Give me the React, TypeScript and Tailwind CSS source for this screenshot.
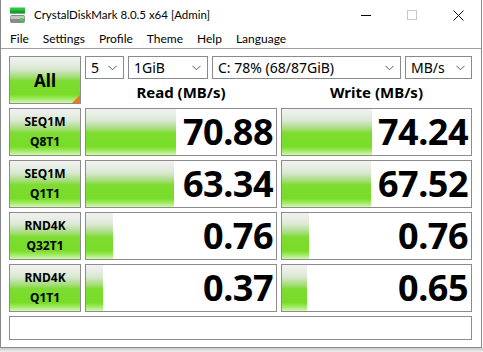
import React from 'react';

const barBg =
  'bg-[linear-gradient(180deg,#f2f2f2_0%,#dbe8d4_25%,#a9dd80_42%,#7edc30_52%,#78dc28_82%,#a6ec6a_92%,#d4f8b4_100%)]';

interface Result {
  top: string;
  bottom: string;
  read: string;
  write: string;
  readBar: number;
  writeBar: number;
}

const results: Result[] = [
  { top: 'SEQ1M', bottom: 'Q8T1', read: '70.88', write: '74.24', readBar: 90, writeBar: 90 },
  { top: 'SEQ1M', bottom: 'Q1T1', read: '63.34', write: '67.52', readBar: 88, writeBar: 89 },
  { top: 'RND4K', bottom: 'Q32T1', read: '0.76', write: '0.76', readBar: 27, writeBar: 27 },
  { top: 'RND4K', bottom: 'Q1T1', read: '0.37', write: '0.65', readBar: 17, writeBar: 25 },
];

const Chevron = () => (
  <svg width="9" height="6" viewBox="0 0 9 6" className="shrink-0">
    <path d="M0.5 0.8 L4.5 4.8 L8.5 0.8" fill="none" stroke="#5a5a5a" strokeWidth="1" />
  </svg>
);

const Select: React.FC<{ label: string; width: string }> = ({ label, width }) => (
  <div className={`${width} h-[23px] border border-[#8a8a8a] bg-white flex items-center justify-between pl-[5px] pr-[6px] text-[14px] text-black`}>
    <span className="leading-none">{label}</span>
    <Chevron />
  </div>
);

const ScoreBox: React.FC<{ value: string; bar: number }> = ({ value, bar }) => (
  <div className="relative h-[48px] border border-[#8c8c8c] bg-white overflow-hidden">
    <div className={`absolute left-0 top-0 bottom-0 ${barBg}`} style={{ width: `${bar}px` }} />
    <div className="relative h-full flex items-center justify-end pr-[3px] text-[36px] font-bold text-black leading-none tracking-[-0.5px]">
      {value}
    </div>
  </div>
);

export default function App() {
  return (
    <div className="w-[483px] h-[352px] bg-white overflow-hidden font-['Noto_Sans','Open_Sans',sans-serif]">
      <div className="w-[482px] h-[348px] border-l border-r border-b border-[#8a8a8a] bg-white flex flex-col">
        {/* title bar */}
        <div className="h-[30px] flex items-center shrink-0">
          <svg width="17" height="17" viewBox="0 0 17 17" className="ml-[8px]">
            <rect x="1" y="0.5" width="15" height="6" fill="#2ec44a" />
            <rect x="1" y="3.5" width="15" height="3" fill="#1e9a32" />
            <rect x="1" y="8" width="15" height="8" rx="2" fill="#8a8a8a" />
            <rect x="1.5" y="9" width="14" height="3" rx="1" fill="#c4c4c4" />
            <rect x="11" y="11" width="3" height="3" fill="#3cd84a" />
          </svg>
          <span className="ml-[8px] text-[11.5px] text-black font-['Lato',sans-serif]">CrystalDiskMark 8.0.5 x64 [Admin]</span>
          <div className="ml-auto flex items-center h-full">
            <div className="w-[46px] h-full flex items-center justify-center">
              <div className="w-[10px] h-px bg-black" />
            </div>
            <div className="w-[46px] h-full flex items-center justify-center">
              <div className="w-[10px] h-[10px] border border-[#c8c8c8]" />
            </div>
            <div className="w-[46px] h-full flex items-center justify-center">
              <svg width="11" height="11" viewBox="0 0 11 11">
                <path d="M0.5 0.5 L10.5 10.5 M10.5 0.5 L0.5 10.5" stroke="#111" strokeWidth="1" />
              </svg>
            </div>
          </div>
        </div>

        {/* menu bar */}
        <div className="h-[19px] flex items-center gap-[14px] pl-[9px] text-[12px] text-black border-b border-[#a0a0a0] shrink-0 font-['Lato',sans-serif]">
          <span>File</span>
          <span>Settings</span>
          <span>Profile</span>
          <span>Theme</span>
          <span>Help</span>
          <span>Language</span>
        </div>

        {/* client */}
        <div className="pt-[7px] pl-[8px] grid grid-cols-[72px_192px_191px] gap-x-[4px] gap-y-[4px]">
          <div className={`relative h-[48px] border border-[#8c8c8c] ${barBg} flex items-center justify-center`}>
            <span className="text-[17px] font-bold text-black leading-none">All</span>
            <div className="absolute right-0 bottom-0 w-0 h-0 border-l-[8px] border-l-transparent border-b-[8px] border-b-[#f07818]" />
          </div>
          <div className="col-span-2 flex flex-col">
            <div className="flex gap-[4px]">
              <Select label="5" width="w-[39px]" />
              <Select label="1GiB" width="w-[80px]" />
              <Select label="C: 78% (68/87GiB)" width="w-[189px]" />
              <Select label="MB/s" width="w-[67px]" />
            </div>
            <div className="flex-1 grid grid-cols-[192px_191px] gap-x-[4px] items-center">
              <div className="text-center text-[15px] font-bold text-black leading-none pt-[2px]">Read (MB/s)</div>
              <div className="text-center text-[15px] font-bold text-black leading-none pt-[2px]">Write (MB/s)</div>
            </div>
          </div>

          {results.map((r, i) => (
            <React.Fragment key={i}>
              <div className={`h-[48px] border border-[#8c8c8c] ${barBg} flex flex-col items-center justify-center text-[12px] font-bold text-black leading-[20px]`}>
                <span>{r.top}</span>
                <span>{r.bottom}</span>
              </div>
              <ScoreBox value={r.read} bar={r.readBar} />
              <ScoreBox value={r.write} bar={r.writeBar} />
            </React.Fragment>
          ))}

          <div className="col-span-3 h-[24px] border border-[#8c8c8c] bg-white" />
        </div>
      </div>
      <div className="w-[483px] h-[4px] bg-[linear-gradient(180deg,#c8c8c8,#efefef)]" />
    </div>
  );
}
